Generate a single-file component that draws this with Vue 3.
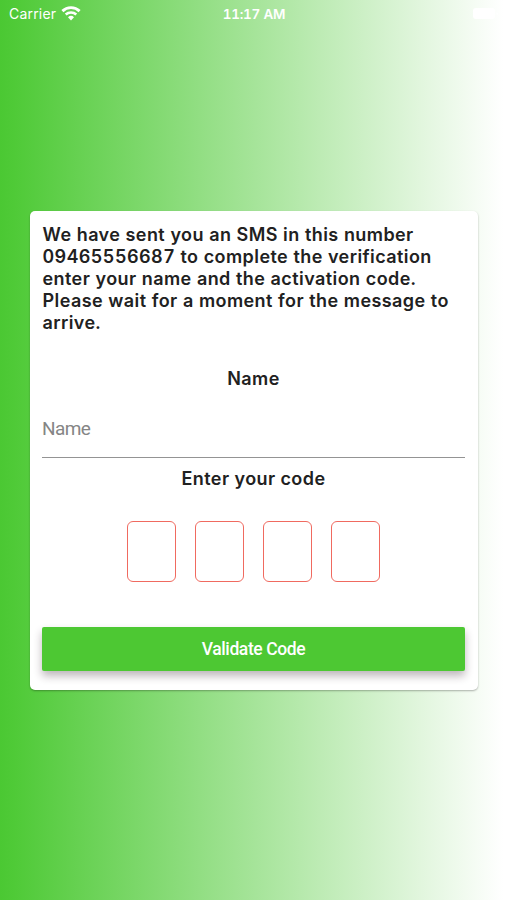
<template>
    <main class="screen">
        <header class="status-bar">
            <div class="carrier">
                <span class="carrier-name">Carrier</span>
                <svg class="wifi" width="20" height="15" viewBox="0 0 20 15" fill="none">
                    <path d="M1.400 5.100a12.300 12.300 0 0 1 17.200 0" stroke="#fff" stroke-width="2.900"/>
                    <path d="M4.700 8.500a7.700 7.700 0 0 1 10.600 0" stroke="#fff" stroke-width="2.500"/>
                    <path d="M10 14.400l-3-3.200a4.300 4.300 0 0 1 6 0z" fill="#fff"/>
                </svg>
            </div>
            <time class="clock">11:17 AM</time>
            <svg class="battery" width="26" height="12" viewBox="0 0 26 12">
                <rect x="0" y="0" width="22" height="11" rx="3" fill="#fff"/>
                <path d="M23.500 4c2 .5 2 3 0 3.500z" fill="#fff"/>
            </svg>
        </header>

        <form class="card" @submit.prevent>
            <p class="message">{{ message }}</p>
            <label class="title" for="name">Name</label>
            <input id="name" v-model="name" class="name-input" type="text" placeholder="Name">
            <h2 class="title code-title">Enter your code</h2>
            <div class="code">
                <input v-for="(digit, i) in code" :key="i" v-model="code[i]" class="code-input" type="text" maxlength="1">
            </div>
            <button class="submit" type="submit">Validate Code</button>
        </form>
    </main>
</template>


<script setup>
import { ref } from 'vue'

const message = [
    'We have sent you an SMS in this number',
    '09465556687 to complete the verification',
    'enter your name and the activation code.',
    'Please wait for a moment for the message to',
    'arrive.'
].join('\n')

const name = ref('')
const code = ref(['', '', '', ''])
</script>


<style>
body {
    margin: 0;
}
</style>

<style scoped>
.screen {
    display: flex;
    flex-direction: column;
    height: 900px;
    overflow: hidden;
    background: linear-gradient(90deg, #4bc833 0, #4fca37 14px, #fff 503px);
    font-family: Inter, "Liberation Sans", sans-serif;
    color: #212121;
}

.status-bar {
    display: grid;
    grid-template-columns: 1fr auto 1fr;
    align-items: center;
    height: 27px;
    padding: 0 8px 0 9px;
    color: #fff;
    font-size: 14px;
}
.carrier {
    display: flex;
    align-items: center;
    gap: 5px;
}
.carrier-name {
    letter-spacing: 0.2px;
}
.clock {
    font-weight: 600;
    font-size: 13.5px;
    letter-spacing: -0.25px;
    font-variant-numeric: tabular-nums;
}
.battery {
    justify-self: end;
}

.card {
    box-sizing: border-box;
    display: flex;
    flex-direction: column;
    width: 448px;
    height: 479px;
    margin: 184px 0 0 30px;
    padding: 13px 13px 0 12px;
    background: #fff;
    border-radius: 5px;
    box-shadow: 0 1px 2px rgba(0, 0, 0, 0.3);
}

.message {
    height: 110px;
    margin: 0;
    padding-left: 0.5px;
    font-size: 18px;
    font-weight: 620;
    line-height: 22px;
    letter-spacing: 0.42px;
    font-variant-numeric: tabular-nums;
    white-space: pre;
}

.title {
    margin: 34px 0 0;
    font-size: 18px;
    font-weight: 620;
    line-height: 22px;
    letter-spacing: 0.42px;
    text-align: center;
}

.name-input {
    box-sizing: border-box;
    height: 57px;
    margin: 11px 0 0;
    padding: 0 0 1px;
    border: 0;
    border-bottom: 1px solid #949494;
    outline: 0;
    background: transparent;
    color: #212121;
    font: 400 19px Roboto, "Liberation Sans", sans-serif;
    letter-spacing: -0.6px;
}
.name-input::placeholder {
    color: #858585;
    opacity: 1;
}

.code-title {
    margin-top: 10px;
}

.code {
    display: flex;
    justify-content: center;
    gap: 19px;
    margin-top: 31px;
}
.code-input {
    box-sizing: border-box;
    width: 49px;
    height: 61px;
    padding: 0;
    border: 1px solid #f06a60;
    border-radius: 6px;
    outline: 0;
    background: transparent;
    font: 600 22px Inter, sans-serif;
    text-align: center;
}

.submit {
    height: 44px;
    margin-top: 45px;
    padding: 0 0 1px;
    border: 0;
    border-radius: 2px;
    background: #4dc833;
    box-shadow: 0 5px 9px rgba(50, 30, 45, 0.32);
    color: #fff;
    font: 500 17.5px Roboto, "Liberation Sans", sans-serif;
    letter-spacing: -0.4px;
}
</style>
